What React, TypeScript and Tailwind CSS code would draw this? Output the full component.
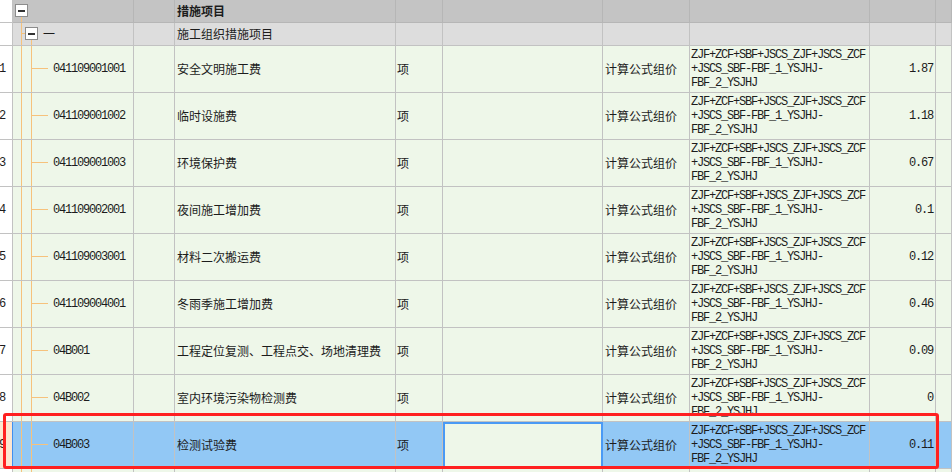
import React from "react";

const GRID =
  "grid grid-cols-[13px_121px_41px_221px_47px_160px_87px_180px_66px_16px]";
const MONO = "font-['Liberation_Mono','Noto_Sans_CJK_SC',monospace] tracking-[-1.2px]";
const CELL = "border-r border-b border-[#c2c2c2] min-w-0 min-h-0 overflow-hidden";
const ORANGE = "#f6c27c";

type Row = { n: number; code: string; name: string; rate: string };

const rows: Row[] = [
  { n: 1, code: "041109001001", name: "安全文明施工费", rate: "1.87" },
  { n: 2, code: "041109001002", name: "临时设施费", rate: "1.18" },
  { n: 3, code: "041109001003", name: "环境保护费", rate: "0.67" },
  { n: 4, code: "041109002001", name: "夜间施工增加费", rate: "0.1" },
  { n: 5, code: "041109003001", name: "材料二次搬运费", rate: "0.12" },
  { n: 6, code: "041109004001", name: "冬雨季施工增加费", rate: "0.46" },
  { n: 7, code: "04B001", name: "工程定位复测、工程点交、场地清理费", rate: "0.09" },
  { n: 8, code: "04B002", name: "室内环境污染物检测费", rate: "0" },
  { n: 9, code: "04B003", name: "检测试验费", rate: "0.11" },
];

function MinusBox({ x, y }: { x: number; y: number }) {
  return (
    <g shapeRendering="crispEdges">
      <rect x={x + 0.5} y={y + 0.5} width={12} height={12} fill="#ffffff" stroke="#8c8c8c" strokeWidth={1.5} />
      <rect x={x + 3} y={y + 6} width={7} height={1.6} fill="#333333" />
    </g>
  );
}

function Formula() {
  return (
    <div className={`${MONO} text-[12px] leading-[14px] whitespace-pre`}>
      <div>ZJF+ZCF+SBF+JSCS_ZJF+JSCS_ZCF</div>
      <div>+JSCS_SBF-FBF_1_YSJHJ-</div>
      <div>FBF_2_YSJHJ</div>
    </div>
  );
}

function DataRow({ r, selected }: { r: Row; selected?: boolean }) {
  const bg = selected ? "bg-[#92c8f5]" : "bg-[#eef7e9]";
  return (
    <div className={`${GRID} grid-rows-[47px] h-[47px]`}>
      <div
        className={`${selected ? "bg-[#fde6d0] border-r-[#3f8ff0]" : "bg-white"} ${CELL} flex items-center justify-end pr-[7px] ${MONO} text-[12px]`}
      >
        <span className="shrink-0">{r.n}</span>
      </div>
      <div className={`${bg} ${CELL} flex items-stretch`}>
        <svg width="40" height="46" className="shrink-0" shapeRendering="crispEdges">
          <line x1="8.5" y1="0" x2="8.5" y2="46" stroke={ORANGE} strokeWidth="1" />
          <line x1="18.5" y1="0" x2="18.5" y2="46" stroke={ORANGE} strokeWidth="1" />
          <line x1="18" y1="22.5" x2="35" y2="22.5" stroke={ORANGE} strokeWidth="1" />
        </svg>
        <span className={`${MONO} self-center text-[12px] leading-[14px]`}>{r.code}</span>
      </div>
      <div className={`${bg} ${CELL}`} />
      <div className={`${bg} ${CELL} flex items-center pl-[2px] text-[12px] leading-[14px] whitespace-nowrap`}>
        {r.name}
      </div>
      <div className={`${bg} ${CELL} flex items-center pl-[1px] text-[12px] leading-[14px]`}>项</div>
      <div
        className={`${selected ? "bg-[#eef7e9] border-2 border-[#4a9af5]" : `${bg} ${CELL}`}`}
      />
      <div className={`${bg} ${CELL} flex items-center pl-[2px] text-[12px] leading-[14px] whitespace-nowrap`}>
        计算公式组价
      </div>
      <div className={`${bg} ${CELL} flex items-center pl-[1px]`}>
        <Formula />
      </div>
      <div className={`${bg} ${CELL} flex items-center justify-end pr-[2px] ${MONO} text-[12px]`}>
        {r.rate}
      </div>
      <div className={`${bg} ${CELL}`} />
    </div>
  );
}

const HCELL = "bg-[#c4c4c4] border-r border-b border-[#b6b6b6] min-w-0 min-h-0 overflow-hidden";
const GCELL = "bg-[#dddddd] border-r border-b border-[#c2c2c2] min-w-0 min-h-0 overflow-hidden";

export default function App() {
  return (
    <div className="relative w-[952px] h-[472px] overflow-hidden bg-white text-[#1c1c1c] font-['Noto_Sans_CJK_SC',sans-serif]">
      {/* header row */}
      <div className={`${GRID} grid-rows-[23px] h-[23px]`}>
        <div className="bg-white border-r border-b border-[#c2c2c2]" />
        <div className={HCELL}>
          <svg width="40" height="22" className="block" shapeRendering="crispEdges">
            <line x1="8.5" y1="16" x2="8.5" y2="22" stroke={ORANGE} strokeWidth="1" />
            <MinusBox x={2} y={4} />
          </svg>
        </div>
        <div className={HCELL} />
        <div className={`${HCELL} flex items-center pl-[2px] text-[12px] font-bold leading-[14px]`}>
          措施项目
        </div>
        <div className={HCELL} />
        <div className={HCELL} />
        <div className={HCELL} />
        <div className={HCELL} />
        <div className={HCELL} />
        <div className={HCELL} />
      </div>

      {/* group row */}
      <div className={`${GRID} grid-rows-[23px] h-[23px]`}>
        <div className="bg-white border-r border-b border-[#c2c2c2]" />
        <div className={`${GCELL} flex items-stretch`}>
          <svg width="28" height="22" className="shrink-0" shapeRendering="crispEdges">
            <line x1="8.5" y1="0" x2="8.5" y2="22" stroke={ORANGE} strokeWidth="1" />
            <line x1="8" y1="10.5" x2="12" y2="10.5" stroke={ORANGE} strokeWidth="1" />
            <line x1="18.5" y1="16" x2="18.5" y2="22" stroke={ORANGE} strokeWidth="1" />
            <MinusBox x={12} y={4} />
          </svg>
          <span className="ml-[2px] self-center text-[12px] leading-[14px]">一</span>
        </div>
        <div className={GCELL} />
        <div className={`${GCELL} flex items-center pl-[2px] text-[12px] leading-[14px]`}>
          施工组织措施项目
        </div>
        <div className={GCELL} />
        <div className={GCELL} />
        <div className={GCELL} />
        <div className={GCELL} />
        <div className={GCELL} />
        <div className={GCELL} />
      </div>

      {rows.map((r) => (
        <DataRow key={r.n} r={r} selected={r.n === 9} />
      ))}

      {/* partially visible next row */}
      <div className={`${GRID} grid-rows-[47px] h-[47px]`}>
        <div className={`bg-white ${CELL}`} />
        <div className={`bg-[#eef7e9] ${CELL}`}>
          <svg width="40" height="46" className="block" shapeRendering="crispEdges">
            <line x1="8.5" y1="0" x2="8.5" y2="46" stroke={ORANGE} strokeWidth="1" />
            <line x1="18.5" y1="0" x2="18.5" y2="46" stroke={ORANGE} strokeWidth="1" />
          </svg>
        </div>
        <div className={`bg-[#eef7e9] ${CELL}`} />
        <div className={`bg-[#eef7e9] ${CELL}`} />
        <div className={`bg-[#eef7e9] ${CELL}`} />
        <div className={`bg-[#eef7e9] ${CELL}`} />
        <div className={`bg-[#eef7e9] ${CELL}`} />
        <div className={`bg-[#eef7e9] ${CELL}`} />
        <div className={`bg-[#eef7e9] ${CELL}`} />
        <div className={`bg-[#eef7e9] ${CELL}`} />
      </div>

      {/* red annotation rectangle */}
      <div className="absolute left-[3px] top-[413px] w-[936px] h-[56px] border-[3px] border-[#ff2020] rounded-[3px] pointer-events-none" />
    </div>
  );
}
